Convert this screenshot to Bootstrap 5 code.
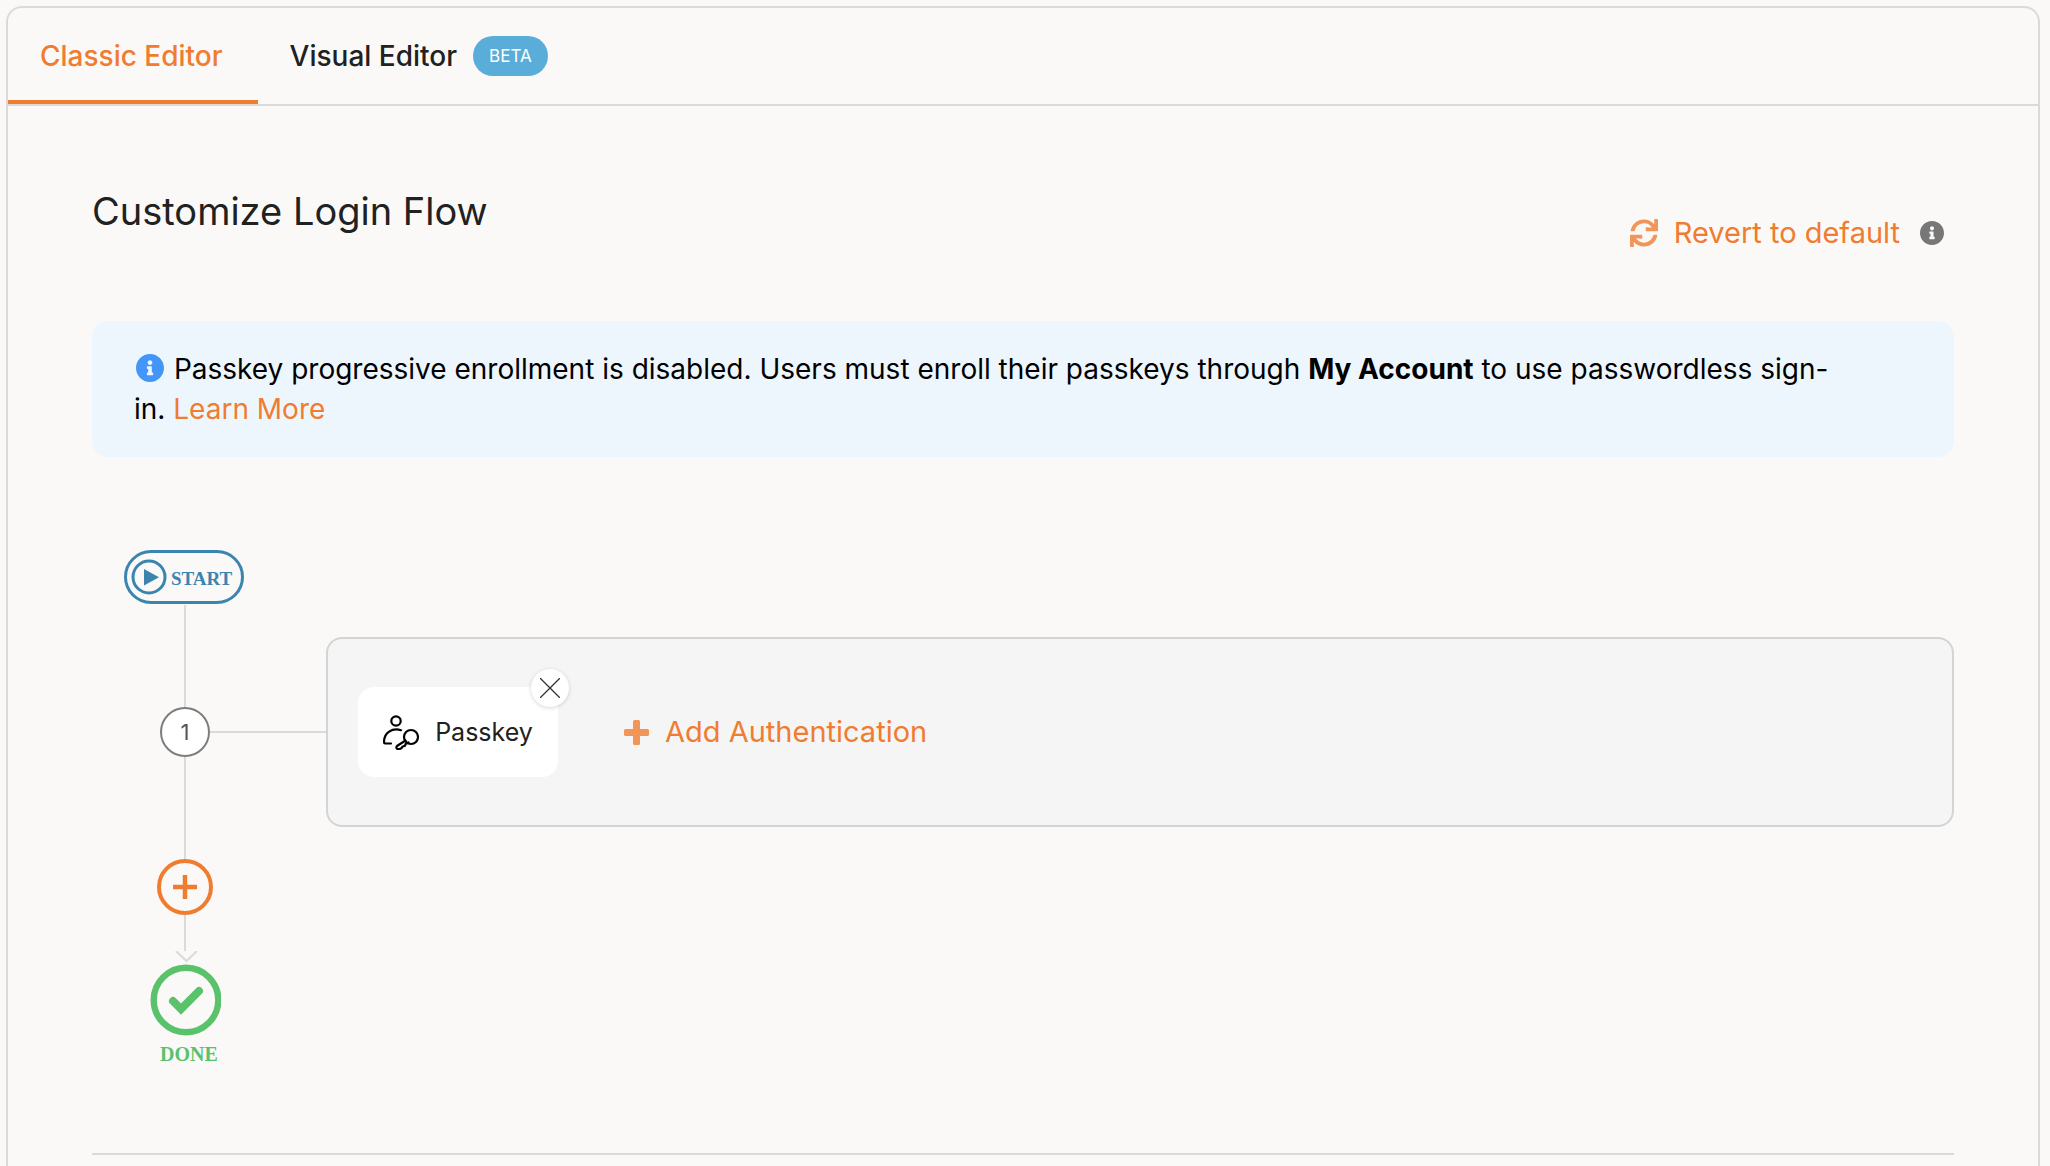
<!DOCTYPE html>
<html lang="en">
<head>
<meta charset="utf-8">
<meta name="viewport" content="width=device-width, initial-scale=1">
<title>Customize Login Flow</title>
<link href="https://cdn.jsdelivr.net/npm/bootstrap@5.3.0/dist/css/bootstrap.min.css" rel="stylesheet">
<style>
  :root { --brand: #f07c30; --rule: #dadad9; }
  body { background: #faf9f7; color: #212121; font-family: Inter, "Noto Sans", sans-serif; font-size: 28px; line-height: 40px; font-weight: 400; padding: 6px 10px 0 6px; }
  a { color: var(--brand); text-decoration: none; }
  a:hover { color: #c95f1a; }
  svg { display: block; flex: none; }
  .editor-shell { border: 2px solid var(--rule); border-bottom: 0; border-radius: 16px 16px 0 0; }
  .editor-tabs { border-bottom: 2px solid var(--rule); }
  .editor-tab { height: 96px; padding: 4px 35px 0 32px; border: 0; border-bottom: 4px solid transparent; background: none; color: #212121; font-weight: 500; }
  .editor-tab.active { color: var(--brand); border-color: var(--brand); }
  .beta-pill { height: 40px; padding: 0 16px; border-radius: 20px; background: #59add8; color: #fff; font-size: 17px; font-weight: 400; }
  .editor-body { padding: 82px 84px 0; }
  .flow-head { height: 65px; margin-bottom: 68px; }
  .flow-title { font-size: 38px; line-height: 46px; font-weight: 400; }
  .link-btn { padding: 0; border: 0; background: none; color: var(--brand); font-size: 29px; font-weight: 400; }
  .link-btn svg { color: #f29558; }
  .revert-group { gap: 20px; margin-right: 10px; }
  .notice { padding: 28px 120px 28px 42px; border-radius: 16px; background: #eef6fd; color: #000; margin-bottom: 93px; }
  .notice svg { display: inline-block; color: #4495f8; vertical-align: -3px; margin: 0 2px; }
  .notice strong { font-weight: 700; }
  .track { width: 122px; margin-left: 32px; }
  .track-line { width: 2px; height: 102px; background: var(--rule); }
  .track-line.short { height: 36px; }
  .step-no { width: 50px; height: 50px; border: 2px solid #7d7d7d; background: #fff; color: #555; font-size: 22px; }
  .stage { margin: 87px 0 0 -36px; }
  .stage-link { width: 116px; height: 2px; background: var(--rule); }
  .stage-panel { min-height: 190px; padding: 0 30px; border: 2px solid #d4d4d4; border-radius: 16px; background: #f5f5f5; }
  .method { width: 200px; height: 90px; border-radius: 16px; background: #fff; font-size: 25px; }
  .method-close { top: -18px; right: -11px; width: 38px; height: 38px; padding: 0; border: 0; background: #fff; box-shadow: 0 1px 4px rgba(0,0,0,.16); }
  .add-auth { margin-left: 66px; }
  .svg-word { font-family: "Liberation Serif", serif; font-weight: 700; }
  .section-rule { height: 2px; margin: 86px 0 0; border: 0; background: var(--rule); opacity: 1; }
</style>
<script src="https://cdn.jsdelivr.net/npm/bootstrap@5.3.0/dist/js/bootstrap.bundle.min.js"></script>
</head>
<body class="d-flex flex-column min-vh-100">
<main class="editor-shell flex-grow-1">
  <div class="editor-tabs d-flex" role="tablist">
    <button class="editor-tab active" type="button" role="tab" aria-selected="true">Classic Editor</button>
    <button class="editor-tab d-flex align-items-center gap-3" type="button" role="tab" aria-selected="false">Visual Editor
      <span class="beta-pill d-flex align-items-center">BETA</span></button>
  </div>
  <div class="editor-body">
    <div class="flow-head d-flex justify-content-between">
      <h1 class="flow-title m-0">Customize Login Flow</h1>
      <div class="revert-group d-flex align-items-center align-self-end">
        <button class="link-btn d-flex align-items-center gap-3" type="button">
          <svg width="28" height="28" viewBox="0 0 512 512" fill="currentColor"><path d="M440.65 12.57l4 82.77A247.16 247.16 0 0 0 255.83 8C134.73 8 33.91 94.92 12.29 209.82A12 12 0 0 0 24.09 224h49.05a12 12 0 0 0 11.67-9.26 175.91 175.91 0 0 1 317-56.94l-101.46-4.86a12 12 0 0 0-12.57 12v47.41a12 12 0 0 0 12 12H500a12 12 0 0 0 12-12V12a12 12 0 0 0-12-12h-47.37a12 12 0 0 0-11.98 12.57zM255.83 432a175.61 175.61 0 0 1-146-77.8l101.8 4.87a12 12 0 0 0 12.57-12v-47.4a12 12 0 0 0-12-12H12a12 12 0 0 0-12 12V500a12 12 0 0 0 12 12h47.35a12 12 0 0 0 12-12.6l-4.15-82.57A247.17 247.17 0 0 0 255.83 504c121.11 0 221.93-86.92 243.55-201.82a12 12 0 0 0-11.8-14.18h-49.05a12 12 0 0 0-11.67 9.26A175.86 175.86 0 0 1 255.83 432z"/></svg>
          Revert to default
        </button>
        <svg width="24" height="24" viewBox="8 8 496 496" fill="#777"><path d="M256 8C119.043 8 8 119.083 8 256c0 136.997 111.043 248 248 248s248-111.003 248-248C504 119.083 392.957 8 256 8zm0 110c23.196 0 42 18.804 42 42s-18.804 42-42 42-42-18.804-42-42 18.804-42 42-42zm56 254c0 6.627-5.373 12-12 12h-88c-6.627 0-12-5.373-12-12v-24c0-6.627 5.373-12 12-12h12v-64h-12c-6.627 0-12-5.373-12-12v-24c0-6.627 5.373-12 12-12h64c6.627 0 12 5.373 12 12v100h12c6.627 0 12 5.373 12 12v24z"/></svg>
      </div>
    </div>

    <div class="notice">
      <svg width="28" height="28" viewBox="8 8 496 496" fill="currentColor"><path d="M256 8C119.043 8 8 119.083 8 256c0 136.997 111.043 248 248 248s248-111.003 248-248C504 119.083 392.957 8 256 8zm0 110c23.196 0 42 18.804 42 42s-18.804 42-42 42-42-18.804-42-42 18.804-42 42-42zm56 254c0 6.627-5.373 12-12 12h-88c-6.627 0-12-5.373-12-12v-24c0-6.627 5.373-12 12-12h12v-64h-12c-6.627 0-12-5.373-12-12v-24c0-6.627 5.373-12 12-12h64c6.627 0 12 5.373 12 12v100h12c6.627 0 12 5.373 12 12v24z"/></svg>
      Passkey progressive enrollment is disabled. Users must enroll their passkeys through <strong>My Account</strong> to use passwordless sign-<wbr><span class="text-nowrap">in. <a href="#">Learn More</a></span>
    </div>

    <div class="d-flex align-items-start">
      <div class="track d-flex flex-column align-items-center flex-shrink-0">
        <svg class="align-self-start" width="120" height="55" viewBox="0 0 120 55" fill="none" stroke="#3a85b0">
          <rect x="1.5" y="1.5" width="117" height="51" rx="25.5" stroke-width="3"/>
          <circle cx="25" cy="27" r="16" stroke-width="3"/>
          <path d="M20 19v16.500l15-8.300z" fill="#3a85b0" stroke="none"/>
          <text class="svg-word" x="47" y="35" font-size="19" fill="#3a85b0" stroke="none">START</text>
        </svg>
        <div class="track-line"></div>
        <div class="step-no rounded-circle d-flex align-items-center justify-content-center">1</div>
        <div class="track-line"></div>
        <button class="link-btn" type="button" aria-label="Add step">
          <svg width="56" height="56" viewBox="0 0 56 56" fill="none" stroke="#f07c30"><circle cx="28" cy="28" r="26" stroke-width="4"/><path d="M28 16v24M16 28h24" stroke-width="4.500"/></svg>
        </button>
        <div class="track-line short"></div>
        <svg width="72" height="116" viewBox="0 0 72 116" fill="none">
          <path d="M27 0l10.500 10L48 0" stroke="#dadad9" stroke-width="2"/>
          <circle cx="37" cy="49" r="32.300" stroke="#5bc26c" stroke-width="6.400"/>
          <path d="M24 50l8 8 18-18" stroke="#5bc26c" stroke-width="8" stroke-linecap="round"/>
          <text class="svg-word" x="11" y="110" font-size="20" fill="#5bc26c">DONE</text>
        </svg>
      </div>
      <div class="stage d-flex align-items-center flex-grow-1">
        <div class="stage-link flex-shrink-0"></div>
        <div class="stage-panel d-flex align-items-center flex-grow-1">
          <div class="method position-relative d-flex align-items-center justify-content-center gap-3">
            <svg width="36" height="36" viewBox="0 1 36 36" fill="none" stroke="#000" stroke-width="2.200" stroke-linecap="round" stroke-linejoin="round"><circle cx="13" cy="8" r="4.700"/><path d="M18 17.200C9 14.500 1 20 1 29c0 1 .5 1.500 1.500 1.500H8"/><circle cx="28" cy="24" r="7"/><path d="M22.500 27.500L14 33c-1.500 2 0 3.500 2 3 3 0 3-1 3.500-2.500 2.500 0 3-1 3-2.500l3-1.500"/></svg>
            Passkey
            <button class="method-close position-absolute rounded-circle d-flex align-items-center justify-content-center" type="button" aria-label="Remove Passkey"><svg width="20" height="20" viewBox="0 0 20 20" stroke="#333" stroke-width="1.300"><path d="M0 0l20 20M20 0L0 20"/></svg></button>
          </div>
          <button class="link-btn add-auth d-flex align-items-center gap-3" type="button">
            <svg width="25" height="25" viewBox="0 0 25 25" fill="currentColor"><rect x="9" width="7" height="25" rx="1.500"/><rect y="9" width="25" height="7" rx="1.500"/></svg>
            Add Authentication
          </button>
        </div>
      </div>
    </div>
    <hr class="section-rule">
  </div>
</main>
</body>
</html>
